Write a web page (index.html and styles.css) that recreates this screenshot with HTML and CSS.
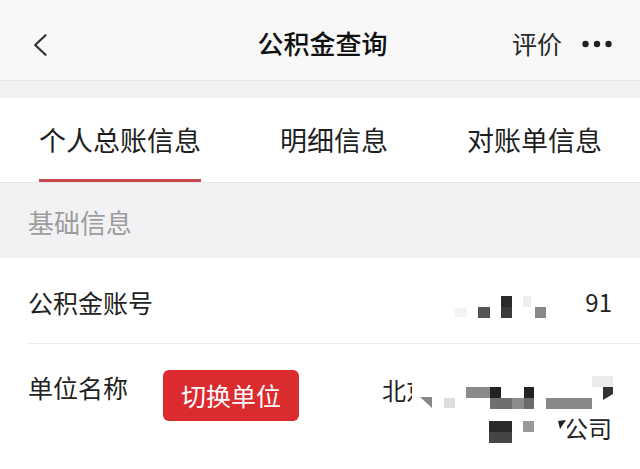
FILE: index.html
```html
<!DOCTYPE html>
<html lang="zh-CN">
<head>
<meta charset="utf-8">
<title>公积金查询</title>
<link rel="stylesheet" href="styles.css">
</head>
<body>
<div class="page">
  <header class="navbar">
    <div class="nav-left">
      <svg class="back" width="14" height="22" viewBox="0 0 14 22"><path d="M12.5 1.2 L2.2 11 L12.5 20.8" fill="none" stroke="#333" stroke-width="2.2" stroke-linecap="round" stroke-linejoin="round"/></svg>
    </div>
    <div class="nav-title">公积金查询</div>
    <div class="nav-right">
      <span class="rate">评价</span>
      <svg class="more" width="30" height="8" viewBox="0 0 30 8"><circle cx="3.5" cy="4" r="3.2" fill="#222"/><circle cx="15" cy="4" r="3.2" fill="#222"/><circle cx="26.5" cy="4" r="3.2" fill="#222"/></svg>
    </div>
  </header>
  <div class="spacer"></div>
  <nav class="tabs">
    <div class="tab active">个人总账信息</div>
    <div class="tab">明细信息</div>
    <div class="tab">对账单信息</div>
  </nav>
  <div class="section-title">基础信息</div>
  <div class="row row-account">
    <div class="label">公积金账号</div>
    <div class="value">91</div>
    <svg class="mosaic" width="640" height="85" viewBox="0 0 640 85">
      <rect x="455" y="50" width="12" height="9" fill="#f3f3f3"/>
      <rect x="478" y="49" width="12" height="11" fill="#555"/>
      <rect x="501" y="38" width="11" height="11" fill="#2a2a2a"/>
      <rect x="501" y="49" width="11" height="11" fill="#3a3a3a"/>
      <rect x="523" y="38" width="8" height="11" fill="#eeeeee"/>
      <rect x="535" y="49" width="11" height="11" fill="#888"/>
      <rect x="576" y="30" width="8" height="28" fill="#fff"/>
    </svg>
  </div>
  <div class="row row-unit">
    <div class="label">单位名称</div>
    <button class="switch-btn">切换单位</button>
    <div class="value multi">
      <div class="line first">北京</div>
      <div class="line last">公司</div>
    </div>
    <svg class="mosaic" width="640" height="125" viewBox="0 0 640 125">
      <rect x="412" y="28" width="200" height="38" fill="#fff"/>
      <polygon points="420,53 432,53 432,64" fill="#888"/>
      <rect x="444" y="54" width="11" height="10" fill="#dddddd"/>
      <rect x="466" y="43" width="24" height="11" fill="#8a8a8a"/>
      <rect x="490" y="43" width="11" height="11" fill="#222"/>
      <rect x="490" y="54" width="22" height="11" fill="#6f6f6f"/>
      <rect x="512" y="54" width="12" height="11" fill="#8c8c8c"/>
      <rect x="524" y="54" width="10" height="11" fill="#6a6a6a"/>
      <rect x="524" y="43" width="10" height="11" fill="#222"/>
      <rect x="546" y="54" width="46" height="11" fill="#888"/>
      <rect x="592" y="32" width="21" height="11" fill="#ebebeb"/>
      <polygon points="603,43 613,43 613,50 603,56" fill="#333"/>
      <rect x="489" y="77" width="23" height="11" fill="#2a2a2a"/>
      <rect x="489" y="88" width="23" height="11" fill="#454545"/>
      <rect x="523" y="77" width="11" height="11" fill="#999"/>
      <polygon points="557,82 566,75 568,90 560,92" fill="#fff"/>
      <polygon points="558,77 566,76 560,85" fill="#222"/>
    </svg>
  </div>
</div>
</body>
</html>
```
FILE: styles.css
```css
* { box-sizing: border-box; margin: 0; padding: 0; }
html, body { width: 640px; height: 469px; overflow: hidden; background: #fff; }
body { font-family: "Noto Sans CJK SC", "Noto Sans", "Liberation Sans", sans-serif; color: #1a1a1a; }

.page { width: 640px; }

.navbar {
  height: 81px;
  background: #f8f8f8;
  border-bottom: 1px solid #e9e9e9;
  display: grid;
  grid-template-columns: 1fr auto 1fr;
  align-items: center;
  padding: 0 28px 0 33px;
}
.nav-left { display: flex; align-items: center; padding-top: 10px; }
.back { display: block; }
.nav-title { font-size: 26px; font-weight: 500; color: #111; line-height: 1; margin-top: 6px; }
.nav-right { display: flex; justify-content: flex-end; align-items: center; gap: 20px; margin-top: 6px; }
.rate { font-size: 25px; color: #2b2b2b; line-height: 1; }
.more { display: block; margin-top: 2px; }

.spacer { height: 17px; background: #f2f2f2; }

.tabs {
  height: 85px;
  background: #fff;
  border-bottom: 1px solid #e6e6e6;
  display: flex;
  gap: 79px;
  padding-left: 39px;
}
.tab {
  font-size: 27px;
  color: #1e1e1e;
  display: flex;
  align-items: center;
  padding-top: 2px;
  border-bottom: 3px solid transparent;
  line-height: 1;
}
.tab.active { border-bottom-color: #c8494e; }

.section-title {
  height: 75px;
  background: #f2f2f4;
  color: #9d9d9d;
  font-size: 26px;
  line-height: 1;
  padding-left: 28px;
  display: flex;
  align-items: center;
  padding-top: 2px;
}

.row { position: relative; background: #fff; display: flex; padding: 0 28px; }
.row .label { font-size: 25px; color: #222; line-height: 1; }
.row .value { margin-left: auto; font-size: 24px; color: #222; line-height: 1; }
.mosaic { position: absolute; left: 0; top: 0; pointer-events: none; }

.row-account {
  height: 86px;
  align-items: center;
  padding-top: 2px;
}
.row-account::after {
  content: "";
  position: absolute;
  left: 28px; right: 0; bottom: 0;
  border-bottom: 1px solid #ebebeb;
}

.row-unit { height: 125px; align-items: flex-start; padding-top: 30px; }
.row-unit .label { line-height: 26px; }
.switch-btn {
  margin-left: 35px;
  margin-top: -4px;
  width: 136px;
  height: 51px;
  background: #db2b2f;
  border: none;
  border-radius: 6px;
  color: #fff;
  font-family: inherit;
  font-size: 25px;
  line-height: 1;
}
.value.multi { width: 230px; margin-top: -4px; }
.value.multi .line { line-height: 40px; height: 40px; }
.value.multi .first { text-align: left; }
.value.multi .last { text-align: right; margin-top: -2px; }
```
